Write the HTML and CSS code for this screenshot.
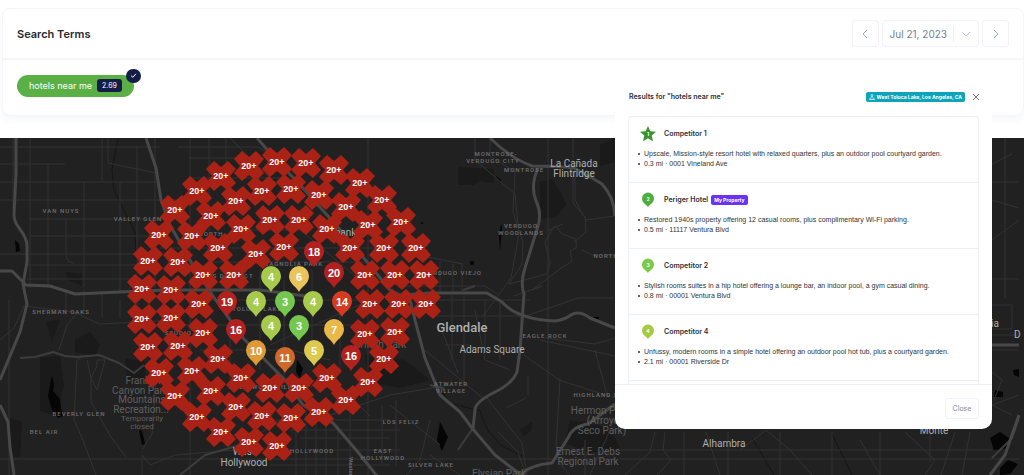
FILE: index.html
```html
<!DOCTYPE html>
<html lang="en">
<head>
<meta charset="utf-8">
<title>Search Terms</title>
<link rel="stylesheet" href="styles.css">
</head>
<body>
<main class="page">
  <section class="card">
    <header class="card-head">
      <h1 class="card-title">Search Terms</h1>
      <div class="date-nav">
        <button class="date-btn date-step" aria-label="Previous date"><svg width="8" height="10" viewBox="0 0 8 10"><path d="M6 1 2 5l4 4"/></svg></button>
        <button class="date-btn date-pick"><span>Jul 21, 2023</span><span class="date-caret"><svg width="10" height="8" viewBox="0 0 10 8"><path d="M1 2l4 4 4-4"/></svg></span></button>
        <button class="date-btn date-step" aria-label="Next date"><svg width="8" height="10" viewBox="0 0 8 10"><path d="M2 1l4 4-4 4"/></svg></button>
      </div>
    </header>
    <div class="card-body">
      <button class="term"><span>hotels near me</span><span class="term-score">2.69</span><span class="term-check"><svg width="7" height="7" viewBox="0 0 7 7"><path d="M1 3.6 2.8 5.3 6 1.8"/></svg></span></button>
    </div>
  </section>

  <section class="map" aria-label="Ranking map">
    <svg class="map-svg" viewBox="0 138 1024 337" preserveAspectRatio="xMinYMin slice">
      <defs>
        <path id="cross" d="M-15-7-7-15 0-9 7-15 15-7 9 0 15 7 7 15 0 9-7 15-15 7-9 0z"/>
        <path id="pin" d="M0 15C-2 10-10 7-10-1A10 10 0 0 1 10-1C10 7 2 10 0 15z"/>
      </defs>
      <g class="park">
        <path d="M458 167l36 2v14l-15-2-6 4h-15zM540 182l12-3 8 12 6 14-10 12-16 2zM600 145l15-8v25l-15 4zM40 358l20-2 4 30-8 30-16-5zM75 340l15-8 10 12-5 12-20-4zM10 418l12 4-2 35h-10zM46 322l14-2-8 22zM125 358l20 4v18h-18zM66 272l16 2v12l-14-6zM365 355l40 5 25 20-30 8-30-6zM570 420l40 8 10 20-30 5-25-10zM520 430l12-8v8l-8 6z"/>
      </g>
      <g class="water">
        <path d="M52 375l2 10-1 6 7 8 1 9 2 8-5 2-6-8-4-14z"/>
        <path d="M139 430l3 1 3 13-3 1z"/>
        <path d="M440 422l8 15-6 14-5-11z"/>
        <path d="M495 175l6 5-1 2zM499 236l2-12 1 3-2 24zM15 240l4 4 1 7-4 1zM593 317h6v2h-4zM297 360l6 8-3 10-4-6z"/>
        <path d="M990 438l10-6 12 8-4 8-14 2zM1000 468l8-8 10 4-8 10-10 1zM995 390l8 2v5h-9zM1013 370l6-1v8l-5-2z"/>
        <circle cx="472" cy="263" r="2"/><circle cx="422" cy="223" r="1"/>
      </g>
      <g class="creek">
        <path d="M118 138l-6 32 2 20 12 24 9 18 2 40"/>
        <path d="M430 375l20 28 30 8 8 20 14 15 20 10"/>
        <path d="M752 438l22 37M832 434l20 41"/>
      </g>
      <g class="street">
        <path d="M0 164h65M0 182h160M0 200h190M30 219h130M30 236h125M0 254h140M27 265h120M27 279h115M0 147h160"/>
        <path d="M13 138v70M30 138v150M48 164v124M66 219v34q0 10 8 10M84 182v105M102 138v44M120 182v110M137 146v144M155 138v150M108 138v25l48 10M190 138v337M209 138v100M226 138v60M178 147h80l20 12M190 158h70M190 178h90M207 262h160M160 248h230M230 138l45 45"/>
        <path d="M9 300v175M0 459h615M548 138v337M368 138v337M120 300v18M84 290v24M102 292v26M66 290v20M137 295v23"/>
        <path d="M200 300h180M180 325h200M200 350h90l40 10M230 280v100M260 270v100M284 280v110M312 270v80M340 290v80M270 345l100-45M240 230h60l60 50"/>
        <path d="M270 420h120M290 430h110M300 438h90M310 450h90M270 465h120M296 405v70M306 410v65M316 412v63M326 420v55M338 425v50M350 410v65M382 405v60M396 400v66M330 415l60-20 60-10M270 386h70l30 30"/>
        <path d="M400 286h85l12 8M440 262v32M453 264v30M462 264v30M428 257l35 7M430 300h100M430 316h90M452 295v65M464 296v90M485 300v50M475 310l10 50 25 10M440 325l18 48M445 345h24M500 300v60"/>
        <path d="M475 138v22l40 34 4 40-8 44-28 38M490 138v18l25 16-2 40 10 30-1 22-13 20 38-10 3-12-5-20 8-14 10-4"/>
        <path d="M548 231l8-5 6 8 14 5v9l-6 3 2 10-12 8-28 21 10-4-28 10M573 138v65l12 14 1 15-12 10M585 220l30-4M582 250l10 5h23M575 170v30l8 15"/>
        <path d="M520 318l58-20 36 0M540 340l75 16M524 355l35 25 56 18M560 378l-4 70M595 350l12 45M528 375v20M545 338l50 6 20-6M487 398l35 45 5 32M425 350l60 50M498 432l20 20 8 23M506 408l20-10"/>
        <path d="M430 420l-10 40-14 15M430 455l30 20M390 405l50 40M560 464l10 11M585 440v35M610 430l-20 45"/>
        <path d="M0 340l14-12 10-22 50 6 25 12 80-4M59 350l8-25 10-12M82 357l-5 3-3 60 8 18 14 37M87 360l4 18 6-12v-6l8 0-8 30-6-12v24l20 35 15 20M142 450l10-16 4-60M142 475v-20l8 10 25-10 60-5 45-30"/>
        <path d="M620 450h372M655 432l-5 20-25 23M665 432l-2 18 8 10-14 15M684 432v43M706 432l14 43M728 432v43M740 450l26-20 24 20 22 25M780 432v43M832 432v43M860 440l20 35M880 432v43M905 432l30 28-10 15M930 432v30M955 432l-14 43M970 432l-8 43M620 459h399"/>
        <path d="M992 305h20v24h-20M992 335h27M992 350h27M992 372l10 8-8 20M1019 395l-27 10 20 10"/>
        <path d="M992 164l20-10M992 182h27M992 200l27 8M992 240l27-20M1005 138v160M992 279h27"/>
      </g>
      <g class="road">
        <path d="M20 358l15-1 18-5 12 4 12 1 22-2 20 8 15 10 10-8"/>
        <path d="M430 385l15 4M475 286l-12 4M473 428l-15 22M1019 418l-7 20-20 20"/>
        <path d="M180 475l25-20 35-10"/>
      </g>
      <g class="highway">
        <path d="M16 138v35l-2 42q0 6 5 13 8 10 8 18v16l-4 22 4 20-7 28-20 48M0 405l8 17 2 25 4 28"/>
        <path d="M0 271h12l14 14 24 1 25 8 45-2 45-2h95l60 8"/>
        <path d="M146 138l10 30 5 32 9 25 25 44 20 30 28 39 44 44 16 23 30 18 24 28 20 25"/>
        <path d="M257 138l13 15 30 32 45 50 45 55 20 10 5 20 10 38 15 37 20 17 12 16 23 27 26 20"/>
        <path d="M390 296l40-3h57l15 9q15 17 53 19 9-1 16-6 8-5 19 3l25 10"/>
        <path d="M490 138q20 20 42 28 25 0 42 2 14 7 28 16 12 13 13 32"/>
        <path d="M538 168q-8 18-2 33 6 12 2 25l-13 42q-5 15-1 26l-4 56-3 22q-5 12-22 20-20 10-20 18l-2 18"/>
        <path d="M520 475q10-10 32-12l16-25q5-12 20-14l27-20M992 345h27M1019 415l-14 40-15 20"/>
      </g>
      <g class="area">
        <text x="61" y="213">VAN NUYS</text><text x="138" y="221">VALLEY GLEN</text>
        <text x="61" y="314">SHERMAN OAKS</text><text x="79" y="416">BEVERLY GLEN</text><text x="44" y="434">BEL AIR</text>
        <text x="496" y="156">MONTROSE-</text><text x="493" y="163">VERDUGO CITY</text><text x="524" y="172">MONTROSE</text>
        <text x="521" y="228">VERDUGO</text><text x="521" y="235">WOODLANDS</text><text x="453" y="275">VERDUGO VIEJO</text>
        <text x="545" y="338">EAGLE ROCK</text><text x="451" y="386">ATWATER</text><text x="451" y="393">VILLAGE</text>
        <text x="401" y="424">LOS FELIZ</text><text x="312" y="453">HOLLYWOOD</text><text x="383" y="453">EAST</text><text x="383" y="460">HOLLYWOOD</text>
        <text x="431" y="467">SILVER LAKE</text><text x="603" y="397">HIGHLAND PARK</text><text x="606" y="258">NORTH</text>
        <text x="293" y="266">MAGNOLIA PARK</text><text x="257" y="311">TOLUCA LAKE</text><text x="211" y="236">NORTH</text><text x="226" y="278">ARTS DISTRICT</text><text x="188" y="335">STUDIO CITY</text><text x="263" y="389">HOLLYWOOD HILLS</text>
        <text transform="translate(349 457) rotate(90)" class="start">Western Ave</text>
      </g>
      <g class="park-name">
        <text x="143" y="384">Franklin</text><text x="140" y="394">Canyon Park</text><text x="142" y="403">Mountains</text><text x="141" y="413">Recreation...</text>
        <text x="142" y="421" class="small">Temporarily</text><text x="142" y="429" class="small">closed</text>
        <text x="380" y="348">Griffith Park</text><text x="600" y="414">Hermon Park</text><text x="603" y="424">(Arroyo</text><text x="602" y="434">Seco Park)</text>
        <text x="588" y="455">Ernest E. Debs</text><text x="588" y="465">Regional Park</text><text x="499" y="477">Elysian Park</text>
      </g>
      <g class="town">
        <text x="574" y="167">La Cañada</text><text x="574" y="177">Flintridge</text><text x="492" y="353">Adams Square</text>
        <text x="462" y="332" class="big">Glendale</text><text x="338" y="236">Burbank</text><text x="244" y="455">West</text><text x="244" y="466">Hollywood</text>
        <text x="724" y="447">Alhambra</text><text x="934" y="434">Monte</text><text x="982" y="327">Arcadia</text><text x="1014" y="338" class="start">D</text>
      </g>
      <g id="markers"></g>
    </svg>
  </section>

  <section class="modal" role="dialog" aria-labelledby="modal-title">
    <header class="modal-head">
      <h2 class="modal-title" id="modal-title">Results for "hotels near me"</h2>
      <span class="tag tag-place"><svg width="6" height="6" viewBox="0 0 6 6"><circle cx="3" cy="1.5" r="1"/><path d="M3 2.5v2M1.5 3.5.5 5.5h5l-1-2"/></svg>West Toluca Lake, Los Angeles, CA</span>
      <button class="modal-x" aria-label="Close dialog"><svg width="8" height="8" viewBox="0 0 8 8"><path d="M1 1l6 6M7 1 1 7"/></svg></button>
    </header>
    <div class="results">
      <article class="result">
        <h3 class="result-name"><svg class="rank" viewBox="0 0 16 16"><path class="rank-1" d="M8 0l2.300 5.200 5.700.6-4.300 3.800 1.300 5.700L8 12.300l-5 3 1.300-5.700L0 5.800l5.700-.6z"/><text x="8" y="10">1</text></svg>Competitor 1</h3>
        <ul class="facts"><li>Upscale, Mission-style resort hotel with relaxed quarters, plus an outdoor pool courtyard garden.</li><li>0.3 mi · 0001 Vineland Ave</li></ul>
      </article>
      <article class="result">
        <h3 class="result-name"><svg class="rank" viewBox="0 0 16 16"><path class="rank-2" d="M8 15C6 12 2 11 2 6.500a6 6 0 0 1 12 0C14 11 10 12 8 15z"/><text x="8" y="9">2</text></svg>Periger Hotel <span class="tag tag-own">My Property</span></h3>
        <ul class="facts"><li>Restored 1940s property offering 12 casual rooms, plus complimentary Wi-Fi parking.</li><li>0.5 mi · 11117 Ventura Blvd</li></ul>
      </article>
      <article class="result">
        <h3 class="result-name"><svg class="rank" viewBox="0 0 16 16"><path class="rank-3" d="M8 15C6 12 2 11 2 6.500a6 6 0 0 1 12 0C14 11 10 12 8 15z"/><text x="8" y="9">3</text></svg>Competitor 2</h3>
        <ul class="facts"><li>Stylish rooms suites in a hip hotel offering a lounge bar, an indoor pool, a gym casual dining.</li><li>0.8 mi · 00001 Ventura Blvd</li></ul>
      </article>
      <article class="result">
        <h3 class="result-name"><svg class="rank" viewBox="0 0 16 16"><path class="rank-4" d="M8 15C6 12 2 11 2 6.500a6 6 0 0 1 12 0C14 11 10 12 8 15z"/><text x="8" y="9">4</text></svg>Competitor 4</h3>
        <ul class="facts"><li>Unfussy, modern rooms in a simple hotel offering an outdoor pool hot tub, plus a courtyard garden.</li><li>2.1 mi · 00001 Riverside Dr</li></ul>
      </article>
    </div>
    <footer class="modal-foot"><button class="close-btn">Close</button></footer>
  </section>
</main>
<script src="markers.js"></script>
</body>
</html>
```
FILE: styles.css
```css
* { box-sizing: border-box; }
body { margin: 0; background: #fff; font-family: Inter, "Liberation Sans", sans-serif; color: #2b2f33; }
button { font: inherit; cursor: pointer; }
h1, h2, h3, ul { margin: 0; padding: 0; }
svg { flex: none; }
.page { position: relative; min-height: 100vh; display: flex; flex-direction: column; overflow: hidden; }

.card { margin: 8px 0 22px 2px; border: 1px solid #f4f5fa; border-radius: 8px; box-shadow: 0 4px 8px #f6f7fb; }
.card-head { display: flex; align-items: center; justify-content: space-between; height: 51px; padding: 0 14px; border-bottom: 2px solid #f6f6fa; }
.card-title { font-size: 11px; font-weight: 600; line-height: 16px; color: #25282c; }
.date-nav { display: flex; gap: 3px; }
.date-btn { display: flex; align-items: center; justify-content: center; height: 27px; padding: 0; border: 1px solid #f1f2f8; border-radius: 3px; background: #fff; color: #6f7f95; font-size: 10px; }
.date-btn svg { fill: none; stroke: #9aa8bc; stroke-width: 1; }
.date-step { width: 27px; }
.date-pick { padding-left: 7px; }
.date-caret { display: flex; align-items: center; height: 16px; margin-left: 6px; padding: 0 7px; border-left: 1px solid #eceef4; }
.date-btn .date-caret svg { stroke: #b9c0cb; }
.card-body { height: 55px; padding: 13px 14px; }
.term { position: relative; display: inline-flex; align-items: center; gap: 5px; height: 22px; padding: 0 12px; border: 0; border-radius: 11px; background: #5ab045; color: #fff; font-size: 9px; }
.term-score { padding: 0 5px; border-radius: 3px; background: #141d47; font-size: 7px; line-height: 13px; }
.term-check { position: absolute; top: -6px; right: -7px; display: flex; align-items: center; justify-content: center; width: 15px; height: 14px; border-radius: 7px; background: #141d47; }
.term-check svg { fill: none; stroke: #fff; stroke-width: 1; }

.map { position: relative; flex: 1; min-height: 337px; background: #212121; overflow: hidden; }
.map-svg { position: absolute; inset: 0; width: 100%; height: 100%; }
.street, .road, .highway, .creek { fill: none; stroke-linejoin: round; }
.street { stroke: #333; stroke-width: 1; }
.road { stroke: #3d3d3d; stroke-width: 2; }
.highway { stroke: #484848; stroke-width: 3; }
.creek { stroke: #151515; stroke-width: 1; }
.park { fill: #1a1a1a; }
.water { fill: #050505; }
.map-svg text { font-family: Roboto, sans-serif; text-anchor: middle; }
.area text { font-size: 6px; font-weight: 500; fill: #707070; letter-spacing: 1px; }
.park-name text { font-size: 10px; fill: #606060; }
.park-name .small { font-size: 8px; }
.town text { font-size: 10px; fill: #b0b0b0; }
.town .big { font-size: 13px; font-weight: 500; }
.map-svg .start { text-anchor: start; letter-spacing: 0; }
#markers text { font-family: "Liberation Sans", sans-serif; font-size: 9px; font-weight: 700; fill: #fff; }
#markers .pin-label { font-size: 11px; }
.c-miss { fill: #aa2116; }
.c-red { fill: #b32020; }
.c-scarlet { fill: #d63b22; }
.c-rust { fill: #d2692c; }
.c-orange { fill: #e09a35; }
.c-amber { fill: #eab749; }
.c-yellow { fill: #dbc950; }
.c-gold { fill: #eac35a; }
.c-lime { fill: #a8ca4c; }
.c-green { fill: #76c74d; }

.modal { position: absolute; top: 80px; right: 32px; width: 377px; max-width: 90%; background: #fff; border-radius: 10px; font-size: 7px; }
.modal-head { display: flex; align-items: center; height: 36px; padding: 0 11px 3px 14px; }
.modal-title { flex: 1; font-size: 7px; font-weight: 600; }
.tag { border-radius: 2px; color: #fff; font-weight: 700; white-space: nowrap; }
.tag-place { display: flex; align-items: center; gap: 2px; height: 10px; padding: 0 3px; background: #0fa3ba; font-size: 5px; }
.tag-place svg { fill: none; stroke: #b8e6ec; stroke-width: 1; }
.tag-own { height: 10px; margin-left: 3px; padding: 0 3px; background: #6a32f5; font-size: 5px; line-height: 10px; }
.modal-x { display: flex; margin-left: 6px; padding: 1px; border: 0; background: none; }
.modal-x svg { fill: none; stroke: #6c7178; stroke-width: 1; }
.results { margin: 0 13px; border: 1px solid #eef0f8; border-bottom: 0; border-radius: 3px 3px 0 0; padding-bottom: 3px; }
.result { padding: 8px 8px 13px; border-bottom: 1px solid #eef0f8; }
.result-name { display: flex; align-items: center; height: 17px; padding-left: 3px; font-size: 7px; font-weight: 600; }
.rank { width: 16px; height: 16px; margin-right: 8px; }
.rank text { fill: #fff; font-size: 5px; font-weight: 700; text-anchor: middle; }
.rank-1 { fill: #38932d; }
.rank-2 { fill: #4eae40; }
.rank-3 { fill: #7cca48; }
.rank-4 { fill: #a4cb42; }
.facts { margin-top: 7px; list-style: none; font-family: "Liberation Sans", Arial, sans-serif; line-height: 10px; color: #303336; }
.facts li { display: flex; align-items: center; gap: 4px; padding-left: 1px; }
.facts li::before { content: ""; flex: none; width: 2px; height: 2px; border-radius: 1px; background: #303336; }
.modal-foot { display: flex; justify-content: flex-end; padding: 13px 13px 10px; border-top: 1px solid #eef0f8; }
.close-btn { width: 34px; height: 21px; padding: 0; border: 1px solid #f1f2f8; border-radius: 3px; background: #fff; color: #7b899d; font-size: 7px; }
```
FILE: markers.js
```js
const misses = [
  [277,162],[306,163],[249,166],[334,170],[221,176],[360,183],[197,191],[382,200],[175,210],[401,222],
  [291,189],[262,191],[319,195],[236,201],[346,207],[211,216],[368,225],[192,236],[159,235],[416,248],
  [270,220],[299,220],[241,229],[327,229],[218,248],[350,248],[384,248],[256,254],[284,247],[178,262],
  [148,261],[203,275],[234,275],[365,275],[395,275],[424,275],[142,289],[171,290],[199,304],[370,304],
  [399,304],[426,304],[142,319],[171,318],[203,333],[365,334],[395,332],[148,347],[178,346],[218,359],
  [384,359],[159,373],[192,371],[241,378],[327,378],[368,382],[270,388],[299,388],[175,396],[211,391],
  [346,400],[236,407],[319,412],[197,417],[262,416],[291,418],[221,432],[249,442],[277,446]
];
const pins = [
  [314,252,18,"red"],[334,273,20,"red"],[271,277,4,"lime"],[299,277,6,"gold"],
  [227,302,19,"red"],[256,302,4,"lime"],[285,302,3,"green"],[313,302,4,"lime"],[342,302,14,"scarlet"],
  [236,330,16,"red"],[271,326,4,"lime"],[299,326,3,"green"],[334,330,7,"amber"],
  [256,351,10,"orange"],[285,358,11,"rust"],[314,351,5,"yellow"],[351,356,16,"red"]
];
const mark = (shape, x, y, label, color, cls, drop) =>
  `<use href="#${shape}" x="${x}" y="${y}" class="c-${color}"/><text x="${x}" y="${y + drop}" class="${cls}">${label}</text>`;
document.getElementById("markers").innerHTML =
  misses.map(([x, y]) => mark("cross", x, y, "20+", "miss", "miss-label", 3)).join("") +
  pins.map(([x, y, n, c]) => mark("pin", x, y, n, c, "pin-label", 4)).join("");
```
